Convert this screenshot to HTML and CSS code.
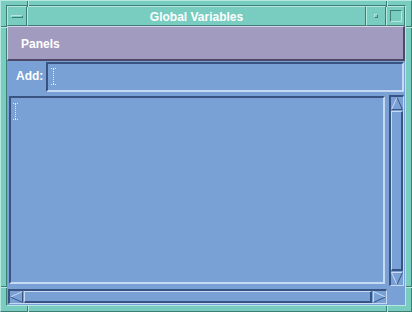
FILE: index.html
```html
<!doctype html>
<html lang=en >
<head>
<meta charset=utf-8 >
<title>Global Variables</title>
<link rel="stylesheet" href="styles.css">
</head>
<body>

	<div class=window >

		<span class="mark mv" style="left:26px;top:0;" ></span>
		<span class="mark mv" style="left:385px;top:0;" ></span>
		<span class="mark mv" style="left:26px;top:305px;" ></span>
		<span class="mark mv" style="left:385px;top:305px;" ></span>
		<span class="mark mh" style="left:0;top:25px;" ></span>
		<span class="mark mh" style="left:405px;top:25px;" ></span>
		<span class="mark mh" style="left:0;top:285px;" ></span>
		<span class="mark mh" style="left:405px;top:285px;" ></span>

		<div class=inset >

			<div class=titlebar >
				<div class="tbtn menu" ><span class=bar ></span></div>
				<div class=title >Global Variables</div>
				<div class="tbtn min" ><span class=dot ></span></div>
				<div class="tbtn max" ><span class=box ></span></div>
			</div>

			<div class=client >

				<div class=panels >Panels</div>

				<div class=addrow >
					<label>Add:</label>
					<div class=field >
						<svg class=caret width=5 height=17 viewBox="0 0 5 17" ><path d="M0 0.5h5M2.5 1v15M0 16.5h5" stroke="#e4ecfa" stroke-width=1 stroke-dasharray="1 1" fill=none /></svg>
					</div>
				</div>

				<div class=scrollbox >

					<div class=text >
						<svg class=caret width=5 height=17 viewBox="0 0 5 17" ><path d="M0 0.5h5M2.5 1v15M0 16.5h5" stroke="#e4ecfa" stroke-width=1 stroke-dasharray="1 1" fill=none /></svg>
					</div>

					<div class="sbar vert" >
						<svg class=arrow width=12 height=13 viewBox="0 0 12 13" ><path d="M6 0.5L0.5 12.5H11.5Z" fill="#79a1d5" /><path d="M0.5 12.5L6 0.5" stroke="#c6daf4" /><path d="M6 0.5L11.5 12.5H0.5" stroke="#3a5482" fill=none /></svg>
						<div class=slider ></div>
						<svg class=arrow width=12 height=13 viewBox="0 0 12 13" ><path d="M6 12.5L0.5 0.5H11.5Z" fill="#79a1d5" /><path d="M6 12.5L0.5 0.5H11.5" stroke="#c6daf4" fill=none /><path d="M11.5 0.5L6 12.5" stroke="#3a5482" /></svg>
					</div>

					<div class="sbar horiz" >
						<svg class=arrow width=13 height=12 viewBox="0 0 13 12" ><path d="M0.5 6L12.5 0.5V11.5Z" fill="#79a1d5" /><path d="M0.5 6L12.5 0.5" stroke="#c6daf4" /><path d="M0.5 6L12.5 11.5V0.5" stroke="#3a5482" fill=none /></svg>
						<div class=slider ></div>
						<svg class=arrow width=13 height=12 viewBox="0 0 13 12" ><path d="M12.5 6L0.5 0.5V11.5Z" fill="#79a1d5" /><path d="M0.5 11.5V0.5L12.5 6" stroke="#c6daf4" fill=none /><path d="M12.5 6L0.5 11.5" stroke="#3a5482" /></svg>
					</div>

				</div>

			</div>

		</div>

	</div>

</body>
</html>
```
FILE: styles.css
```css
html, body { margin: 0; background-color: #79cdc0; font: bold 12px "Liberation Sans", Arial, sans-serif; color: #fff; }

.window { background-color: #79cdc0; border: 1px solid; border-color: #b6e8e0 #3e7e75 #3e7e75 #b6e8e0; box-sizing: border-box; height: 312px; padding: 4px 5px 5px 5px; position: relative; width: 412px; }

.mark { position: absolute; }
.mv { border-left: 1px solid #3e7e75; border-right: 1px solid #b6e8e0; height: 6px; }
.mh { border-top: 1px solid #3e7e75; border-bottom: 1px solid #b6e8e0; width: 6px; }

.inset { border: 1px solid; border-color: #3e7e75 #b6e8e0 #b6e8e0 #3e7e75; display: flex; flex-direction: column; height: 100%; box-sizing: border-box; }

.titlebar { display: flex; height: 20px; }
.tbtn, .title { border: 1px solid; border-color: #b6e8e0 #3e7e75 #3e7e75 #b6e8e0; box-sizing: border-box; display: flex; align-items: center; justify-content: center; }
.menu { width: 20px; }
.min { width: 20px; }
.max { width: 19px; }
.title { flex: 1; font-size: 12px; padding-top: 1px; }

.menu .bar { border: 1px solid; border-color: #b6e8e0 #3e7e75 #3e7e75 #b6e8e0; height: 1px; width: 10px; }
.min .dot { border: 1px solid; border-color: #b6e8e0 #3e7e75 #3e7e75 #b6e8e0; height: 2px; width: 2px; }
.max .box { border: 1px solid; border-color: #3e7e75 #b6e8e0 #b6e8e0 #3e7e75; height: 10px; width: 10px; }

.client { background-color: #79a1d5; flex: 1; display: flex; flex-direction: column; }

.panels { background-color: #a19bc0; border-style: solid; border-width: 1px 2px 2px 1px; border-color: #d6d3e8 #4d4868 #4d4868 #d6d3e8; box-sizing: border-box; font-size: 12px; height: 35px; line-height: 34px; padding-left: 13px; }

.addrow { align-items: center; display: flex; height: 34px; }
.addrow label { font-size: 12px; margin: 0 3px 0 9px; padding-bottom: 4px; }
.field { border-style: solid; border-width: 2px; border-color: #3a5482 #c6daf4 #c6daf4 #3a5482; box-sizing: border-box; flex: 1; height: 30px; margin-right: 1px; margin-top: -2px; }
.field .caret { display: block; margin: 4px 0 0 3px; }

.scrollbox { display: grid; grid-template-columns: 380px 18px; grid-template-rows: 192px 17px; }

.text { border-style: solid; border-width: 2px; border-color: #3a5482 #c6daf4 #c6daf4 #3a5482; box-sizing: border-box; height: 188px; margin: 1px 0 0 2px; width: 376px; }
.text .caret { display: block; margin: 5px 0 0 2px; }

.sbar { border-style: solid; border-width: 2px 1px 1px 2px; border-color: #3a5482 #c6daf4 #c6daf4 #3a5482; box-sizing: border-box; display: flex; }
.vert { flex-direction: column; height: 191px; margin-left: 2px; width: 15px; }
.horiz { grid-column: 1 / 3; height: 15px; margin: 2px 0 0 1px; width: 379px; }

.arrow { display: block; flex: none; }
.slider { border-style: solid; border-width: 1px 2px 2px 1px; border-color: #c6daf4 #3a5482 #3a5482 #c6daf4; box-sizing: border-box; flex: 1; }
.vert .slider { margin: 1px 0; }
.horiz .slider { margin: 0 1px; }
```
